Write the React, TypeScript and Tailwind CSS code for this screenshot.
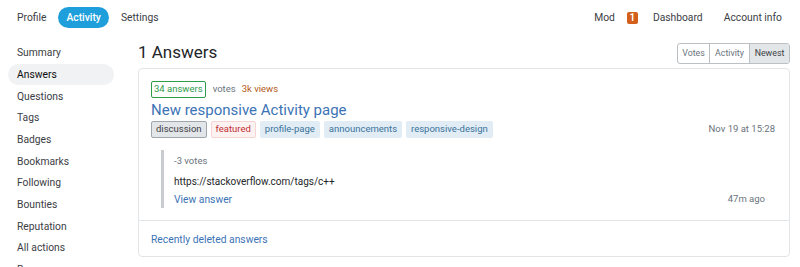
import React from "react";

const font = { fontFamily: "Roboto, 'Noto Sans', Arial, sans-serif" };

export default function App() {
  const side = ["Summary","Answers","Questions","Tags","Badges","Bookmarks","Following","Bounties","Reputation","All actions","Responses"];
  return (
    <div className="w-[800px] h-[267px] overflow-hidden bg-white text-[#3b4045] text-[10.3px]" style={font}>
      <div className="flex items-center justify-between h-[35px] pl-[17px] pr-[18px]">
        <div className="flex items-center gap-[12px]">
          <span>Profile</span>
          <span className="bg-[#1e9fdc] text-white rounded-full px-[8px] h-[21px] flex items-center font-medium">Activity</span>
          <span>Settings</span>
        </div>
        <div className="flex items-center">
          <span>Mod</span>
          <span className="ml-[12px] bg-[#d35f1a] text-white text-[10px] font-semibold w-[11px] h-[12px] flex items-center justify-center rounded-[2px]">1</span>
          <span className="ml-[15px]">Dashboard</span>
          <span className="ml-[21px]">Account info</span>
        </div>
      </div>
      <div className="flex">
        <div className="w-[130px] pl-[8px] pt-[7px] flex flex-col">
          {side.map((s) => (
            <div key={s} className={`h-[21.7px] shrink-0 flex items-center pl-[9px] w-[106px] rounded-full ${s === "Answers" ? "bg-[#f1f2f3] text-[#0c0d0e]" : ""}`}>{s}</div>
          ))}
        </div>
        <div className="ml-[8px] w-[652px]">
          <div className="flex items-center justify-between h-[33px] pt-[2px]">
            <span className="text-[17px] text-[#232629]">1 Answers</span>
            <div className="flex border border-[#bbc0c4] rounded-[3px] text-[8.8px] h-[21px] overflow-hidden mt-[2px]">
              <span className="w-[32px] justify-center flex items-center border-r border-[#bbc0c4] text-[#6a737c]">Votes</span>
              <span className="w-[40px] justify-center flex items-center border-r border-[#bbc0c4] text-[#6a737c]">Activity</span>
              <span className="w-[39px] justify-center flex items-center bg-[#e3e6e8] text-[#3b4045]">Newest</span>
            </div>
          </div>
          <div className="border border-[#e3e6e8] rounded-[4px] h-[189px] flex flex-col">
            <div className="px-[12px] pt-[12px] pb-[12px] border-b border-[#e3e6e8]">
              <div className="flex items-center gap-[7px] text-[9.5px]">
                <span className="border border-[#2f9c4a] text-[#2f9c4a] rounded-[2px] px-[2px] h-[17px] flex items-center">34 answers</span>
                <span className="text-[#6a737c]">votes</span>
                <span className="text-[#b55a1a] -ml-[1px]">3k views</span>
              </div>
              <div className="text-[15px] text-[#3c73b5] mt-[2px] leading-[20px]">New responsive Activity page</div>
              <div className="flex items-center justify-between mt-[1px]">
                <div className="flex items-center gap-[4px] text-[9.5px]">
                  <span className="bg-[#e3e6e8] border border-[#9fa6ad] text-[#3b4045] rounded-[2px] px-[4px] h-[17px] flex items-center">discussion</span>
                  <span className="bg-[#fdf2f2] border border-[#f6d4d4] text-[#c22e32] rounded-[2px] px-[4px] h-[17px] flex items-center">featured</span>
                  <span className="bg-[#e1ecf4] text-[#39739d] rounded-[2px] px-[5px] h-[17px] flex items-center">profile-page</span>
                  <span className="bg-[#e1ecf4] text-[#39739d] rounded-[2px] px-[5px] h-[17px] flex items-center">announcements</span>
                  <span className="bg-[#e1ecf4] text-[#39739d] rounded-[2px] px-[5px] h-[17px] flex items-center">responsive-design</span>
                </div>
                <span className="text-[#6a737c] text-[9.5px] mr-[2px]">Nov 19 at 15:28</span>
              </div>
              <div className="flex items-end justify-between mt-[12px] ml-[10px] pr-[12px]">
                <div className="border-l-[3px] border-[#c8ccd0] pl-[10px] h-[58px] flex flex-col">
                  <span className="text-[9.5px] text-[#6a737c] leading-[14px] mt-[4px]">-3 votes</span>
                  <span className="text-[10px] text-[#232629] leading-[14px] mt-[7px]">https://stackoverflow.com/tags/c++</span>
                  <span className="text-[10.3px] text-[#3c73b5] leading-[14px] mt-[4px]">View answer</span>
                </div>
                <span className="text-[9.5px] text-[#6a737c] mb-[2px]">47m ago</span>
              </div>
            </div>
            <div className="px-[12px] pt-[3px] flex-1 flex items-center text-[10.3px] text-[#3c73b5]">Recently deleted answers</div>
          </div>
        </div>
      </div>
    </div>
  );
}
